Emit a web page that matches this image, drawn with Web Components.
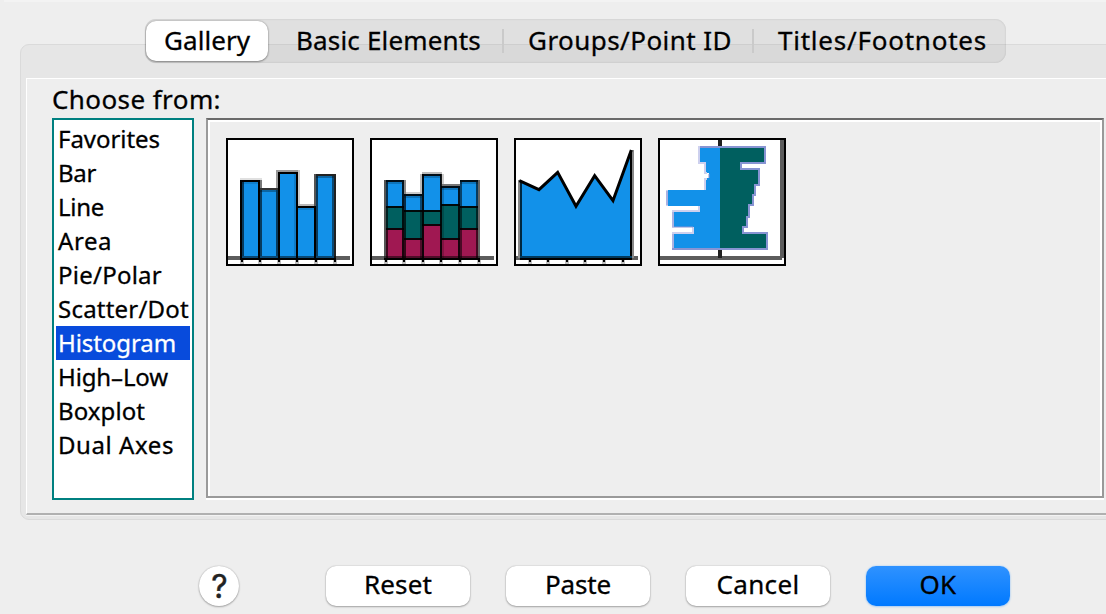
<!DOCTYPE html>
<html lang="en">
<head>
<meta charset="utf-8">
<title>Chart Builder</title>
<style>
html,body{margin:0;height:100%;overflow:hidden;background:#eee}
body{font-family:"Noto Sans","Open Sans",sans-serif;color:#000}
</style>
</head>
<body>
<chart-dialog></chart-dialog>
<script>
const define = (name, html, ready) => customElements.define(name, class extends HTMLElement {
  connectedCallback() {
    if (this.shadowRoot) return;
    this.attachShadow({mode: 'open'}).innerHTML = html;
    if (ready) ready(this);
  }
});

/* Label whose letter spacing is tuned so the text takes the given width. */
define('fit-label', `<style>:host{display:block;white-space:pre;flex:none;-webkit-text-stroke:.3px currentColor}span{display:inline-block}</style><span><slot></slot></span>`, el => {
  const span = el.shadowRoot.querySelector('span');
  const target = +el.getAttribute('w'), n = el.textContent.length;
  el.style.width = target + 'px';
  const natural = span.getBoundingClientRect().width;
  span.style.letterSpacing = ((target - natural) / n).toFixed(3) + 'px';
});

define('tab-item', `<style>
:host{display:flex;box-sizing:border-box;height:40px;align-items:center;padding-left:var(--pad,24px);font-size:26px;line-height:38px;padding-bottom:2px;border-radius:10px}
:host([selected]){background:#fff;box-shadow:0 0 2px rgba(0,0,0,.35),0 1px 2px rgba(0,0,0,.3)}
</style><slot></slot>`);

define('tab-bar', `<style>
:host{display:flex;box-sizing:border-box;width:861px;height:44px;padding:2px 0 0 1px;border-radius:11px;background:rgba(0,0,0,.053);box-shadow:inset 0 0 2px rgba(0,0,0,.16)}
.a{width:122px;--pad:18px}.b{width:234px;--pad:28px}.c{width:248px;--pad:24px}.d{--pad:24px}
i{width:2px;height:24px;margin-top:8px;background:#cacaca}
</style>
<tab-item class="a" selected><fit-label w="86">Gallery</fit-label></tab-item>
<tab-item class="b"><fit-label w="185">Basic Elements</fit-label></tab-item><i></i>
<tab-item class="c"><fit-label w="204">Groups/Point ID</fit-label></tab-item><i></i>
<tab-item class="d"><fit-label w="209">Titles/Footnotes</fit-label></tab-item>`);

define('list-item', `<style>
:host{display:block;height:34px;line-height:34px;font-size:24px;padding-left:2px;overflow:visible}
:host([selected]){background:#084bdc;color:#fff}
</style><slot></slot>`);

define('list-box', `<style>
:host{display:block;box-sizing:border-box;width:142px;height:382px;border:2px solid #008080;background:#fff;padding:2px}
</style><slot></slot>`);

define('chart-tile', `<style>
:host{display:block;box-sizing:border-box;width:128px;height:128px;border:2px solid #000;background:#fff}
svg{display:block}
</style><svg width="124" height="124" viewBox="24 24 372 372"></svg>`, el => {
  const svg = el.shadowRoot.querySelector('svg');
  const B = '#1291e9', G = '#005f5f', R = '#a01852';
  const r = (x, y, x2, y2, f, o = 1) => `<rect x="${x}" y="${y}" width="${x2 - x}" height="${y2 - y}" fill="${f}" fill-opacity="${o}" shape-rendering="crispEdges"/>`;
  const ticks = [66, 120, 177, 231, 288, 345].map(x => r(x - 6, 384, x + 6, 396, '#000', .25) + r(x - 3, 384, x + 3, 390, '#000')).join('');
  const axis = r(24, 372, 390, 384, '#5c5c5c');
  let s = '';
  switch (el.getAttribute('kind')) {
    case 'simple':
      s = axis
        + r(60, 138, 126, 144, '#e0e0e0') + r(120, 144, 126, 168, '#777') + r(168, 114, 234, 120, '#999') + r(168, 120, 174, 168, '#999')
        + r(234, 114, 240, 216, '#ccc') + r(234, 216, 288, 222, '#b8b8b8') + r(282, 126, 288, 222, '#555')
        + r(60, 144, 120, 378, B) + r(120, 168, 174, 378, B) + r(174, 120, 234, 378, B) + r(234, 222, 288, 378, B) + r(288, 126, 348, 378, B)
        + r(60, 144, 120, 150, '#000') + r(66, 150, 114, 156, '#000', .12) + r(120, 168, 174, 174, '#333') + r(120, 174, 168, 180, '#000', .3)
        + r(174, 120, 234, 126, '#000') + r(234, 222, 288, 228, '#000') + r(234, 228, 282, 234, '#000', .12)
        + r(288, 126, 342, 132, '#222') + r(288, 132, 342, 138, '#000', .3)
        + r(60, 144, 66, 384, '#000') + r(66, 150, 72, 372, '#000', .6)
        + r(114, 150, 120, 384, '#000') + r(120, 174, 126, 372, '#000', .6)
        + r(168, 174, 174, 372, '#000', .6) + r(174, 120, 180, 384, '#000') + r(222, 126, 228, 372, '#000', .14)
        + r(228, 120, 234, 384, '#000') + r(282, 228, 288, 384, '#000') + r(288, 132, 294, 372, '#000', .6)
        + r(336, 132, 342, 372, '#000', .5) + r(342, 126, 348, 384, '#222')
        + r(60, 372, 348, 378, '#000', .5) + r(60, 378, 348, 384, '#000') + ticks;
      break;
    case 'stacked': {
      const bars = [[63, 120, 144, 222, 288], [120, 174, 186, 234, 318], [174, 232, 126, 234, 276], [232, 288, 162, 216, 318], [288, 345, 144, 222, 288]];
      s = axis + r(174, 120, 234, 126, '#bbb') + r(234, 156, 288, 162, '#777') + r(120, 180, 174, 186, '#ccc') + r(120, 144, 126, 186, '#888')
        + r(168, 126, 174, 186, '#bbb') + r(234, 126, 240, 156, '#ccc');
      for (const [a, b, t, m, q] of bars)
        s += r(a, t, b, m, B) + r(a, m, b, q, G) + r(a, q, b, 378, R)
          + r(a, t, b, t + 6, '#000', .9) + r(a, t + 6, b, t + 12, '#000', .2) + r(a, m, b, m + 6, '#000', .9) + r(a, q, b, q + 6, '#000', .9);
      s += r(60, 144, 66, 378, '#555') + r(66, 150, 72, 378, '#000', .65)
        + r(114, 150, 120, 378, '#000', .85) + r(120, 192, 126, 378, '#000', .7)
        + r(168, 192, 174, 378, '#000', .5) + r(174, 126, 180, 378, '#000', .9)
        + r(228, 126, 234, 378, '#000', .9) + r(234, 168, 240, 378, '#000', .2)
        + r(282, 168, 288, 378, '#000', .85) + r(288, 150, 294, 378, '#000', .55)
        + r(336, 150, 342, 378, '#000', .6) + r(342, 144, 348, 378, '#666')
        + r(60, 372, 348, 378, '#000', .5) + r(60, 378, 348, 384, '#000') + ticks;
      break;
    }
    case 'polygon':
      s = axis + `<path d="M37 147L93 173L149 121L204 223L260 131L315 206L370 57V378H37Z" fill="${B}"/>`
        + r(30, 144, 36, 378, '#888') + r(36, 150, 42, 378, '#00273e') + r(366, 60, 372, 378, '#000') + r(372, 54, 378, 378, '#888')
        + `<path d="M34 146L93 173L149 121L204 223L260 131L315 206L370 54" fill="none" stroke="#000" stroke-width="9"/>`
        + r(36, 372, 372, 378, '#00395c') + r(36, 378, 372, 384, '#000') + ticks;
      break;
    case 'pyramid':
      s = r(198, 24, 210, 378, '#202020') + r(384, 24, 396, 378, '#5c5c5c') + r(24, 372, 390, 384, '#5c5c5c') + r(198, 354, 210, 378, '#202020')
        + `<g shape-rendering="crispEdges" stroke-width="6"><path d="M204 45H141V93H159V123H171V138H159V174H45V222H141V237H63V285H123V303H63V351H204Z" fill="${B}"/>
        <path d="M141 42V93H159V123H165M165 141H159V174M45 174V222M141 222V237H63V285M123 285V303H63V354" fill="none" stroke="#cdd0ee"/>
        <path d="M60 285H123M171 126V138M63 240V282M63 306V348M45 177V219" fill="none" stroke="#8794d3" stroke-opacity=".5"/>
        <path d="M204 45H339V93H267V111H321V159H309V189H303V219H291V255H285V285H273V303H345V351H204" fill="${G}" stroke="#8794d3"/>
        <path d="M144 45H204M60 351H204" stroke="#8794d3"/></g>`;
  }
  svg.innerHTML = s;
});

define('chart-gallery', `<style>
:host{display:block;box-sizing:border-box;width:898px;height:382px;border-bottom:2px solid #fff}
div{display:flex;box-sizing:border-box;height:380px;gap:16px;border:2px solid #999;border-top-color:#6a6a6a;box-shadow:inset 2px 2px #fff,inset -2px 0 #fff;padding:18px}
</style><div><slot></slot></div>`);

define('group-frame', `<style>
:host{display:block;box-sizing:border-box;width:1100px;height:476px;padding:33px 0 0 5px;border:1px solid #dadada;border-radius:9px;background:#e6e6e6}
.pane{box-sizing:border-box;height:437px;border:solid #fff;border-width:1px 0 0 1px;background:#eee;border-bottom:2px solid #b0b0b0;box-shadow:0 1px #f3f3f3;padding:0 0 0 25px}
.row{display:flex;gap:12px}
fit-label{box-sizing:border-box;font-size:26px;line-height:37px;height:39px;padding-top:2px}
</style>
<div class="pane"><fit-label w="169">Choose from:</fit-label>
<div class="row"><slot></slot></div></div>`);

define('push-button', `<style>
:host{display:flex;box-sizing:border-box;width:144px;height:40px;padding-bottom:4px;justify-content:center;align-items:center;font-size:26px;line-height:34px;border-radius:10px;background:#fff;box-shadow:0 0 1.5px rgba(0,0,0,.28),0 1px 2px rgba(0,0,0,.28)}
:host([primary]){background:linear-gradient(#2f92ff,#0079ff);box-shadow:0 0 2px #9ccbff,0 1px 2px #b5cfec}
:host([round]){width:40px;border-radius:50%;font:400 32px/36px Inter,sans-serif;color:#222;padding:1px 0 0 1px;-webkit-text-stroke:.4px #222}
</style><slot></slot>`);

define('chart-dialog', `<style>
:host{display:grid;width:1106px;height:614px;grid-template:520px 1fr/1106px;overflow:hidden;background:linear-gradient(#f3f3f3,#f3f3f3) 4px 0/100% 2px no-repeat #eee}
group-frame{grid-area:1/1;margin:44px 0 0 20px}
tab-bar{grid-area:1/1;margin:19px 0 0 145px;z-index:1}
.buttons{grid-area:2/1;display:flex;gap:36px;padding:46px 0 0 199px}
push-button:first-child{margin-right:51px}
</style>
<group-frame>
<list-box>
<list-item><fit-label w="102">Favorites</fit-label></list-item>
<list-item><fit-label w="38">Bar</fit-label></list-item>
<list-item><fit-label w="46">Line</fit-label></list-item>
<list-item><fit-label w="54">Area</fit-label></list-item>
<list-item><fit-label w="104">Pie/Polar</fit-label></list-item>
<list-item><fit-label w="131">Scatter/Dot</fit-label></list-item>
<list-item selected><fit-label w="118">Histogram</fit-label></list-item>
<list-item><fit-label w="110">High–Low</fit-label></list-item>
<list-item><fit-label w="87">Boxplot</fit-label></list-item>
<list-item><fit-label w="116">Dual Axes</fit-label></list-item>
</list-box>
<chart-gallery>
<chart-tile kind="simple"></chart-tile><chart-tile kind="stacked"></chart-tile><chart-tile kind="polygon"></chart-tile><chart-tile kind="pyramid"></chart-tile>
</chart-gallery>
</group-frame>
<tab-bar></tab-bar>
<div class="buttons">
<push-button round>?</push-button>
<push-button><fit-label w="68">Reset</fit-label></push-button>
<push-button><fit-label w="66">Paste</fit-label></push-button>
<push-button><fit-label w="83">Cancel</fit-label></push-button>
<push-button primary><fit-label w="37">OK</fit-label></push-button>
</div>`);
</script>
</body>
</html>
